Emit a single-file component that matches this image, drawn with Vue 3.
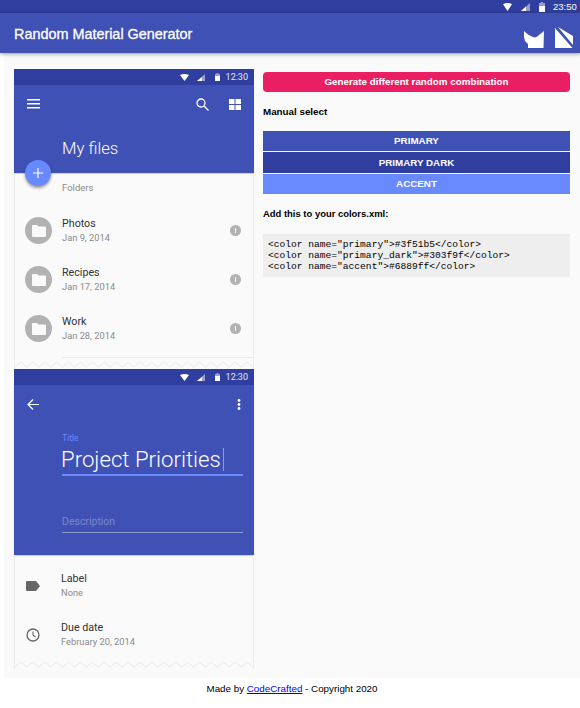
<template>
  <div class="page">
    <div class="status-bar">
      <svg class="st-icon" width="9" height="8" viewBox="0 0 9 8"><path d="M0 1.200C2.500-.4 6.500-.4 9 1.200L4.500 8z" fill="#fff" /></svg>
      <svg class="st-icon signal" width="9" height="8" viewBox="0 0 9 8"><path d="M0 8l9-8v8z" fill="#fff" fill-opacity=".5" /><path d="M0 8l5-4.400V8z" fill="#fff" /></svg>
      <svg class="st-icon batt" width="6" height="10" viewBox="0 0 6 10"><path d="M2 0h2v1h2v9H0V1h2z" fill="#fff" fill-opacity=".5" /><path d="M0 4h6v6H0z" fill="#fff" /></svg>
      <span class="clock">23:50</span>
    </div>
    <header class="app-header">
      <h1>Random Material Generator</h1>
      <div class="logos">
        <svg width="20" height="17" viewBox="0 0 20 17"><path d="M0 0C3 3 6 5 9 6C11 7 13 6 15 4L20 0L19.500 17H4V13L1 10L0 6z" fill="#fff" /></svg>
        <svg width="18" height="21" viewBox="0 0 18 21"><path d="M0 1L17.500 21H0zM3 0L18 9V18z" fill="#fff" /></svg>
      </div>
    </header>

    <main class="content">
      <section class="previews">
        <div class="phone">
          <div class="phone-status">
            <svg width="9" height="7" viewBox="0 0 9 7"><path d="M0 1c2.700-1.300 6.300-1.300 9 0L4.500 7z" fill="#fff" /></svg>
            <svg class="signal" width="8" height="7" viewBox="0 0 8 7"><path d="M0 7l8-7v7z" fill="#fff" fill-opacity=".5" /><path d="M0 7l5-4v4z" fill="#fff" /></svg>
            <svg class="batt" width="5" height="8" viewBox="0 0 5 8"><path d="M1.500 0h2v1H5v7H0V1h1.500z" fill="#fff" fill-opacity=".5" /><path d="M0 3h5v5H0z" fill="#fff" /></svg>
            <span>12:30</span>
          </div>
          <div class="files-toolbar">
            <div class="tool-row">
              <svg width="13" height="10" viewBox="0 0 13 10"><path d="M0 0h13v1.500H0zM0 4h13v1.500H0zM0 8h13v1.500H0z" fill="#fff" /></svg>
              <div class="tool-right">
                <svg width="13" height="13" viewBox="0 0 13 13"><circle cx="5" cy="5" r="4" fill="none" stroke="#fff" stroke-width="1.300" /><path d="M8 8l4.500 4.500" stroke="#fff" stroke-width="1.300" /></svg>
                <svg width="12" height="11" viewBox="0 0 12 11"><path d="M0 0h5.500v5H0zM6.500 0H12v5H6.500zM0 6h5.500v5H0zM6.500 6H12v5H6.500z" fill="#fff" /></svg>
              </div>
            </div>
            <div class="files-title">My files</div>
            <div class="fab">
              <svg width="10" height="10" viewBox="0 0 10 10"><path d="M4.400 0h1.200v10H4.400zM0 4.400h10v1.200H0z" fill="#fff" /></svg>
            </div>
          </div>
          <div class="phone-body files-body">
            <div class="folders-label">Folders</div>
            <div v-for="folder in folders" :key="folder.name" class="file-row">
              <div class="folder-circle">
                <svg width="14" height="12" viewBox="0 0 14 12"><path d="M1 0h4l1.500 1.500H13a1 1 0 0 1 1 1V11a1 1 0 0 1-1 1H1a1 1 0 0 1-1-1V1a1 1 0 0 1 1-1z" fill="#fafafa" /></svg>
              </div>
              <div class="file-text">
                <div class="file-name">{{ folder.name }}</div>
                <div class="file-date">{{ folder.date }}</div>
              </div>
              <div class="info-dot"><span></span></div>
            </div>
            <div class="files-divider"></div>
          </div>
          <svg class="zigzag" width="240" height="9" viewBox="0 0 240 9">
            <path :d="zigzagPath" fill="none" stroke="#e9e9e9" stroke-width="1" />
          </svg>
        </div>

        <div class="phone">
          <div class="phone-status">
            <svg width="9" height="7" viewBox="0 0 9 7"><path d="M0 1c2.700-1.300 6.300-1.300 9 0L4.500 7z" fill="#fff" /></svg>
            <svg class="signal" width="8" height="7" viewBox="0 0 8 7"><path d="M0 7l8-7v7z" fill="#fff" fill-opacity=".5" /><path d="M0 7l5-4v4z" fill="#fff" /></svg>
            <svg class="batt" width="5" height="8" viewBox="0 0 5 8"><path d="M1.500 0h2v1H5v7H0V1h1.500z" fill="#fff" fill-opacity=".5" /><path d="M0 3h5v5H0z" fill="#fff" /></svg>
            <span>12:30</span>
          </div>
          <div class="edit-toolbar">
            <div class="tool-row">
              <svg width="12" height="11" viewBox="0 0 12 11"><path d="M12 5.500H1M6 .5l-5 5 5 5" fill="none" stroke="#fff" stroke-width="1.200" /></svg>
              <svg width="4" height="11" viewBox="0 0 4 11"><circle cx="2" cy="1.500" r="1.400" fill="#fff" /><circle cx="2" cy="5.500" r="1.400" fill="#fff" /><circle cx="2" cy="9.500" r="1.400" fill="#fff" /></svg>
            </div>
            <div class="edit-form">
              <div class="field-label">Title</div>
              <div class="field-title"><span>Project Priorities</span><i class="caret"></i></div>
              <div class="field-desc">Description</div>
            </div>
          </div>
          <div class="phone-body edit-body">
            <div class="detail-row">
              <svg width="14" height="10" viewBox="0 0 14 10"><path d="M1 0h9l4 5-4 5H1a1 1 0 0 1-1-1V1a1 1 0 0 1 1-1z" fill="#666" /></svg>
              <div class="file-text">
                <div class="file-name">Label</div>
                <div class="file-date">None</div>
              </div>
            </div>
            <div class="detail-row">
              <svg width="14" height="14" viewBox="0 0 14 14"><circle cx="7" cy="7" r="6" fill="none" stroke="#666" stroke-width="1.300" /><path d="M7 3.500V7l2.500 2" fill="none" stroke="#666" stroke-width="1.100" /></svg>
              <div class="file-text">
                <div class="file-name">Due date</div>
                <div class="file-date">February 20, 2014</div>
              </div>
            </div>
          </div>
          <svg class="zigzag" width="240" height="9" viewBox="0 0 240 9">
            <path :d="zigzagPath" fill="none" stroke="#e9e9e9" stroke-width="1" />
          </svg>
        </div>
      </section>

      <section class="controls">
        <button class="random-btn">Generate different random combination</button>
        <p class="label manual">Manual select</p>
        <div class="swatches">
          <button v-for="swatch in swatches" :key="swatch.name" class="swatch" :class="swatch.cls">{{ swatch.name }}</button>
        </div>
        <p class="label add">Add this to your colors.xml:</p>
        <pre class="code">{{ xml }}</pre>
      </section>
    </main>

    <footer class="footer">Made by <a href="#">CodeCrafted</a> - Copyright 2020</footer>
  </div>
</template>

<script setup>
const folders = [
  { name: 'Photos', date: 'Jan 9, 2014' },
  { name: 'Recipes', date: 'Jan 17, 2014' },
  { name: 'Work', date: 'Jan 28, 2014' },
]

const swatches = [
  { name: 'PRIMARY', cls: 'primary' },
  { name: 'PRIMARY DARK', cls: 'dark' },
  { name: 'ACCENT', cls: 'accent' },
]

const xml = `<color name="primary">#3f51b5</color>
<color name="primary_dark">#303f9f</color>
<color name="accent">#6889ff</color>`

// torn paper edge under each phone
let zigzagPath = 'M0 7'
for (let x = 0; x < 240; x += 12) {
  zigzagPath += ` L${x + 6} 2 L${x + 12} 7`
}
</script>

<style>
html, body {
  margin: 0;
  background: #fff;
}
</style>

<style scoped>
.page {
  width: 580px;
  height: 708px;
  overflow: hidden;
  font-family: "Liberation Sans", Arial, sans-serif;
  background: #fff;
  position: relative;
}

.status-bar {
  height: 13px;
  background: #303f9f;
  display: flex;
  align-items: center;
  justify-content: flex-end;
  padding-right: 5px;
  color: #fff;
}

.st-icon {
  margin-right: 9px;
}

.st-icon.signal {
  margin-right: 9px;
}

.st-icon.batt {
  margin-right: 8px;
}

.clock {
  font-size: 9.500px;
  width: 22px;
}

.app-header {
  height: 40px;
  background: #3f51b5;
  box-shadow: 0 1px 4px rgba(0, 0, 0, 0.4);
  display: flex;
  align-items: center;
  justify-content: space-between;
  padding: 0 7px 0 14px;
  position: relative;
  z-index: 2;
}

.app-header h1 {
  margin: 1px 0 0;
  font-size: 14.400px;
  font-weight: 400;
  color: #fff;
  -webkit-text-stroke: 0.3px #fff;
}

.logos {
  display: flex;
  align-items: flex-end;
  gap: 11px;
  padding-top: 9px;
}

.content {
  height: 625px;
  margin-left: 4px;
  background: #fafafa;
  display: flex;
  padding: 16px 10px 0;
  box-sizing: border-box;
  gap: 9px;
}

.previews {
  width: 240px;
  flex: none;
}

.phone {
  height: 300px;
  display: flex;
  flex-direction: column;
  position: relative;
  font-family: Roboto, "Noto Sans", sans-serif;
}

.phone-status {
  height: 16px;
  flex: none;
  background: #303f9f;
  display: flex;
  align-items: center;
  justify-content: flex-end;
  padding-right: 6px;
  color: #e3e5f3;
  font-size: 9px;
}

.phone-status .signal {
  margin-left: 8px;
}

.phone-status .batt {
  margin-left: 10px;
  margin-right: 6px;
}

.tool-row {
  height: 38px;
  display: flex;
  align-items: center;
  justify-content: space-between;
  padding: 0 13px 0 13px;
}

.files-toolbar {
  height: 88px;
  flex: none;
  background: #3f51b5;
  position: relative;
  box-shadow: 0 1px 1px rgba(0, 0, 0, 0.15);
}

.tool-right {
  display: flex;
  align-items: center;
  gap: 20px;
}

.files-title {
  margin: 16px 0 0 48px;
  font-size: 16.700px;
  line-height: 20px;
  color: #fff;
  font-weight: 350;
}

.fab {
  position: absolute;
  left: 11px;
  top: 75px;
  width: 26px;
  height: 26px;
  border-radius: 50%;
  background: #6889ff;
  box-shadow: 0 2px 3px rgba(0, 0, 0, 0.4);
  display: flex;
  align-items: center;
  justify-content: center;
}

.phone-body {
  flex: 1;
  border-left: 1px solid #ececec;
  border-right: 1px solid #ececec;
  min-height: 0;
}

.files-body {
  padding-top: 9px;
  position: relative;
}

.folders-label {
  margin-left: 47px;
  font-size: 9.500px;
  line-height: 12px;
  color: #8a8a8a;
  margin-bottom: 16px;
}

.file-row {
  height: 49px;
  display: flex;
  align-items: center;
  padding: 0 12px 8px 10px;
  box-sizing: border-box;
}

.folder-circle {
  width: 27px;
  height: 27px;
  border-radius: 50%;
  background: #b2b2b2;
  display: flex;
  align-items: center;
  justify-content: center;
  flex: none;
}

.file-text {
  flex: 1;
  margin-left: 10px;
}

.file-name {
  font-size: 10.700px;
  line-height: 14px;
  color: #333;
}

.file-date {
  font-size: 9.300px;
  line-height: 14px;
  color: #8a8a8a;
}

.info-dot {
  width: 11px;
  height: 11px;
  border-radius: 50%;
  background: #b2b2b2;
  position: relative;
}

.info-dot span {
  position: absolute;
  left: 5px;
  top: 3px;
  width: 1px;
  height: 5px;
  background: #fafafa;
}

.files-divider {
  height: 1px;
  background: #ececec;
  margin-left: 47px;
}

.zigzag {
  display: block;
  flex: none;
  height: 9px;
  box-sizing: border-box;
  border-left: 1px solid #ececec;
  border-right: 1px solid #ececec;
}

.edit-toolbar {
  height: 170px;
  flex: none;
  background: #3f51b5;
  box-shadow: 0 1px 1px rgba(0, 0, 0, 0.18);
}

.edit-toolbar .tool-row {
  padding: 0 13px;
}

.edit-form {
  margin: 10px 11px 0 48px;
}

.field-label {
  font-size: 8.500px;
  line-height: 11px;
  color: #6889ff;
}

.field-title {
  font-size: 22.200px;
  line-height: 30px;
  color: #fff;
  font-weight: 350;
  border-bottom: 2px solid #6889ff;
  display: flex;
  align-items: center;
}

.field-title span {
  margin-left: -1px;
}

.caret {
  display: block;
  width: 1px;
  height: 23px;
  background: #8e9ad6;
  margin-left: 2px;
}

.field-desc {
  margin-top: 36px;
  font-size: 10.500px;
  line-height: 20px;
  color: #7b87cb;
  border-bottom: 1px solid #8e99d2;
}

.edit-body {
  padding-top: 6px;
}

.detail-row {
  height: 49px;
  display: flex;
  align-items: center;
  padding-left: 11px;
}

.detail-row svg {
  width: 14px;
  flex: none;
}

.detail-row .file-text {
  margin-left: 21px;
}

.controls {
  flex: 1;
  padding-top: 3px;
  min-width: 0;
}

.random-btn {
  display: block;
  width: 100%;
  height: 20px;
  border: none;
  border-radius: 4px;
  background: #ea1f63;
  color: #fff;
  font: 700 9.800px "Liberation Sans", Arial, sans-serif;
  padding: 0 0 2px;
}

.label {
  margin: 0;
  font-size: 9.800px;
  font-weight: 700;
  line-height: 12px;
  color: #000;
}

.manual {
  margin-top: 14px;
  margin-bottom: 13px;
}

.swatches {
  display: flex;
  flex-direction: column;
  gap: 1px;
}

.swatch {
  height: 20px;
  border: none;
  color: #fff;
  font: 700 9.800px "Liberation Sans", Arial, sans-serif;
  padding: 0 0 1px;
}

.swatch.dark {
  height: 21px;
}

.primary {
  background: #3f51b5;
}

.dark {
  background: #303f9f;
}

.accent {
  background: #6889ff;
}

.add {
  margin-top: 14px;
  margin-bottom: 14px;
  font-size: 9.450px;
}

.code {
  margin: 0;
  background: #eee;
  padding: 5px;
  height: 33px;
  font: 9.600px/11px "Liberation Mono", "Courier New", monospace;
  color: #000;
}

.footer {
  position: absolute;
  left: 0;
  right: 0;
  bottom: 13px;
  text-align: center;
  font-size: 9.800px;
  line-height: 12px;
  color: #000;
  padding-left: 4px;
}

.footer a {
  color: #0000ee;
}
</style>
